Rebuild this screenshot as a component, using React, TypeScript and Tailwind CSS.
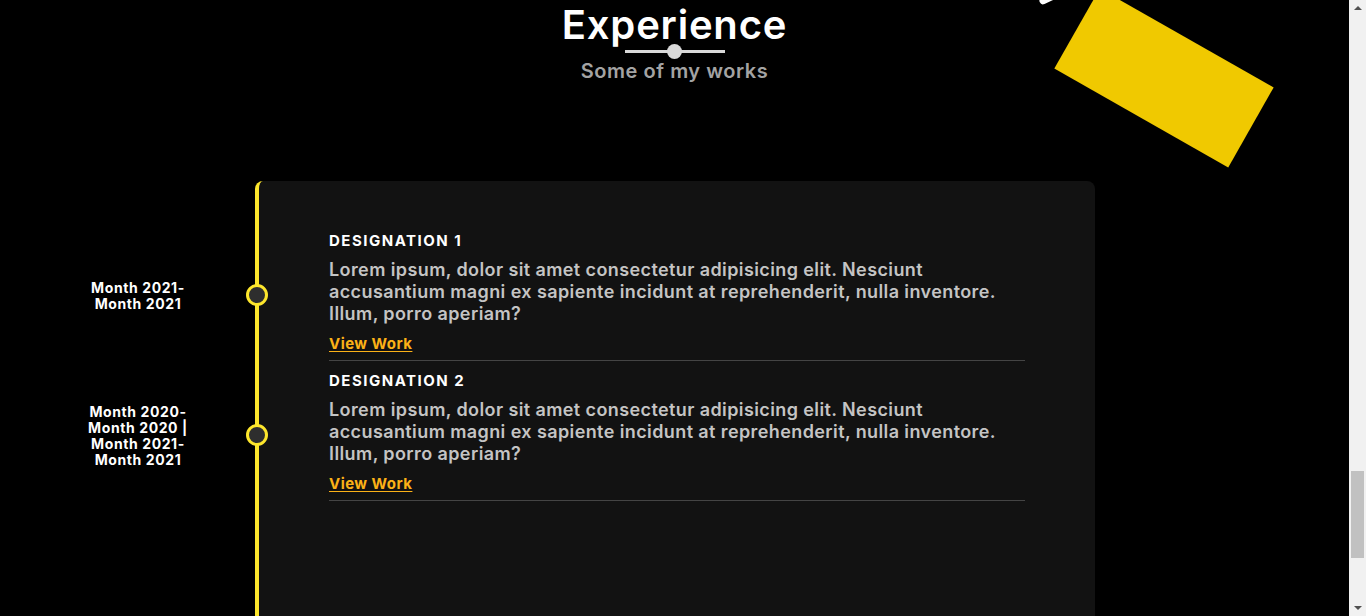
import React from "react";

const items = [
  { title: "DESIGNATION 1", date: ["Month 2021-", "Month 2021"] },
  { title: "DESIGNATION 2", date: ["Month 2020-", "Month 2020 |", "Month 2021-", "Month 2021"] },
];

export default function App() {
  const font = { fontFamily: "Inter, 'Noto Sans', sans-serif" };
  return (
    <div className="flex h-[616px] w-[1366px] overflow-hidden bg-black" style={font}>
      <div className="relative h-full w-[1349px] overflow-hidden">
        {/* decorative shapes */}
        <div className="absolute left-[1064px] top-[32px] h-[92px] w-[200px] rotate-[29.6deg] bg-[#f0c900]" />
        <div className="absolute left-[1039px] top-[-5px] h-[7px] w-[18px] rotate-[-25deg] rounded-sm bg-white" />

        <header className="flex flex-col items-center pt-[2px]">
          <h1 className="text-[40px] font-semibold leading-[46px] tracking-[0.8px] text-white">Experience</h1>
          <div className="relative mt-[-4px] flex h-[14px] w-[100px] items-center justify-center">
            <div className="h-[3px] w-full bg-[#d9d9d9]" />
            <div className="absolute h-[15px] w-[15px] rounded-full bg-[#d9d9d9]" />
          </div>
          <p className="mt-[1px] text-[20px] font-semibold leading-[24px] tracking-[0.55px] text-[#a3a3a3]">Some of my works</p>
        </header>

        <section className="mt-[98px] flex">
          <div className="ml-[21px] flex w-[234px] flex-col pt-[45px]">
            {items.map((it) => (
              <div key={it.title} className="flex h-[140px] flex-col items-center justify-center text-[14px] font-bold leading-[16px] tracking-[0.6px] text-white">
                {it.date.map((d) => (
                  <span key={d}>{d}</span>
                ))}
              </div>
            ))}
          </div>
          <div className="h-[500px] w-[840px] rounded-lg border-l-4 border-[#fde62c] bg-[#121212] pl-[70px] pr-[70px] pt-[40px]">
            {items.map((it) => (
              <div key={it.title} className="relative flex flex-col border-b border-[#444] pb-[7px] pt-[11px]">
                <div className="absolute left-[-83px] top-[63px] h-[22px] w-[22px] rounded-full border-[3px] border-[#fde62c] bg-[#2e2e2e]" />
                <h3 className="text-[15px] font-bold leading-[18px] tracking-[1.5px] text-white">{it.title}</h3>
                <p className="mt-[9px] text-[18px] font-semibold leading-[22px] tracking-[0.4px] text-[#c4c4c4]">
                  Lorem ipsum, dolor sit amet consectetur adipisicing elit. Nesciunt
                  <br />
                  accusantium magni ex sapiente incidunt at reprehenderit, nulla inventore.
                  <br />
                  Illum, porro aperiam?
                </p>
                <a className="mt-[10px] self-start text-[15px] font-bold leading-[18px] tracking-[0.45px] text-[#fbb117] underline underline-offset-2" href="#">
                  View Work
                </a>
              </div>
            ))}
          </div>
        </section>
      </div>
      {/* scrollbar */}
      <div className="flex h-full w-[17px] flex-col items-center bg-[#f1f1f1]">
        <div className="mt-[6px] h-0 w-0 border-x-[4px] border-b-[4px] border-x-transparent border-b-[#505050]" />
        <div className="mt-[461px] h-[87px] w-[13px] bg-[#c1c1c1]" />
        <div className="mt-auto mb-[6px] h-0 w-0 border-x-[4px] border-t-[4px] border-x-transparent border-t-[#505050]" />
      </div>
    </div>
  );
}
